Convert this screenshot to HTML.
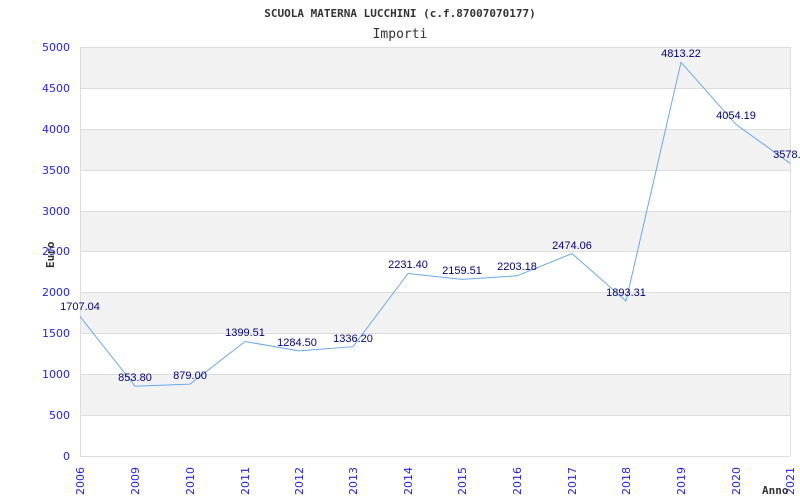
<!DOCTYPE html><html><head><meta charset="utf-8"><style>body{margin:0;background:#fff}svg{display:block}</style></head><body>
<svg width="800" height="500" xmlns="http://www.w3.org/2000/svg">
<text x="400" y="17" text-anchor="middle" font-family="DejaVu Sans Mono,monospace" font-weight="bold" font-size="11" fill="#333">SCUOLA MATERNA LUCCHINI (c.f.87007070177)</text>
<text x="400" y="38" text-anchor="middle" font-family="DejaVu Sans Mono,monospace" font-size="13" fill="#333">Importi</text>
<g fill="#f2f2f2"><rect x="80" y="47" width="710" height="41"/><rect x="80" y="129" width="710" height="41"/><rect x="80" y="211" width="710" height="41"/><rect x="80" y="292" width="710" height="41"/><rect x="80" y="374" width="710" height="41"/></g>
<g stroke="#ddd" stroke-width="1"><line x1="80" y1="47.5" x2="790" y2="47.5"/><line x1="80" y1="88.5" x2="790" y2="88.5"/><line x1="80" y1="129.5" x2="790" y2="129.5"/><line x1="80" y1="170.5" x2="790" y2="170.5"/><line x1="80" y1="211.5" x2="790" y2="211.5"/><line x1="80" y1="251.5" x2="790" y2="251.5"/><line x1="80" y1="292.5" x2="790" y2="292.5"/><line x1="80" y1="333.5" x2="790" y2="333.5"/><line x1="80" y1="374.5" x2="790" y2="374.5"/><line x1="80" y1="415.5" x2="790" y2="415.5"/><line x1="80" y1="456.5" x2="790" y2="456.5"/><line x1="80.5" y1="47" x2="80.5" y2="456"/><line x1="790.5" y1="47" x2="790.5" y2="456"/></g>
<g font-family="DejaVu Sans,sans-serif" font-size="11" fill="#2222ee" text-anchor="end"><text x="70" y="51">5000</text><text x="70" y="92">4500</text><text x="70" y="133">4000</text><text x="70" y="174">3500</text><text x="70" y="215">3000</text><text x="70" y="255">2500</text><text x="70" y="296">2000</text><text x="70" y="337">1500</text><text x="70" y="378">1000</text><text x="70" y="419">500</text><text x="70" y="460">0</text></g>
<g font-family="DejaVu Sans,sans-serif" font-size="11" fill="#2222ee">
<text transform="translate(84,495) rotate(-90)">2006</text><text transform="translate(139,495) rotate(-90)">2009</text><text transform="translate(194,495) rotate(-90)">2010</text><text transform="translate(249,495) rotate(-90)">2011</text><text transform="translate(303,495) rotate(-90)">2012</text><text transform="translate(357,495) rotate(-90)">2013</text><text transform="translate(412,495) rotate(-90)">2014</text><text transform="translate(466,495) rotate(-90)">2015</text><text transform="translate(521,495) rotate(-90)">2016</text><text transform="translate(576,495) rotate(-90)">2017</text><text transform="translate(630,495) rotate(-90)">2018</text><text transform="translate(685,495) rotate(-90)">2019</text><text transform="translate(740,495) rotate(-90)">2020</text><text transform="translate(794,495) rotate(-90)">2021</text></g>
<text x="762" y="494" font-family="DejaVu Sans Mono,monospace" font-weight="bold" font-size="11" fill="#333">Anno</text>
<text transform="translate(54,268) rotate(-90)" font-family="DejaVu Sans Mono,monospace" font-weight="bold" font-size="11" fill="#333">Euro</text>
<polyline fill="none" stroke="#66aaee" stroke-width="1" points="80,316.4 135,386.2 190,384.1 245,341.5 299,350.9 353,346.7 408,273.5 462,279.4 517,275.8 572,253.6 626,301.1 681,62.3 736,124.4 790,163.3"/>
<g font-family="Liberation Sans,sans-serif" font-size="11" fill="#000080" text-anchor="middle">
<text x="80" y="310">1707.04</text><text x="135" y="381">853.80</text><text x="190" y="379">879.00</text><text x="245" y="336">1399.51</text><text x="297" y="346">1284.50</text><text x="353" y="342">1336.20</text><text x="408" y="268">2231.40</text><text x="462" y="274">2159.51</text><text x="517" y="270">2203.18</text><text x="572" y="249">2474.06</text><text x="626" y="296">1893.31</text><text x="681" y="57">4813.22</text><text x="736" y="119">4054.19</text><text x="790" y="158">3578.8</text></g>
</svg></body></html>
